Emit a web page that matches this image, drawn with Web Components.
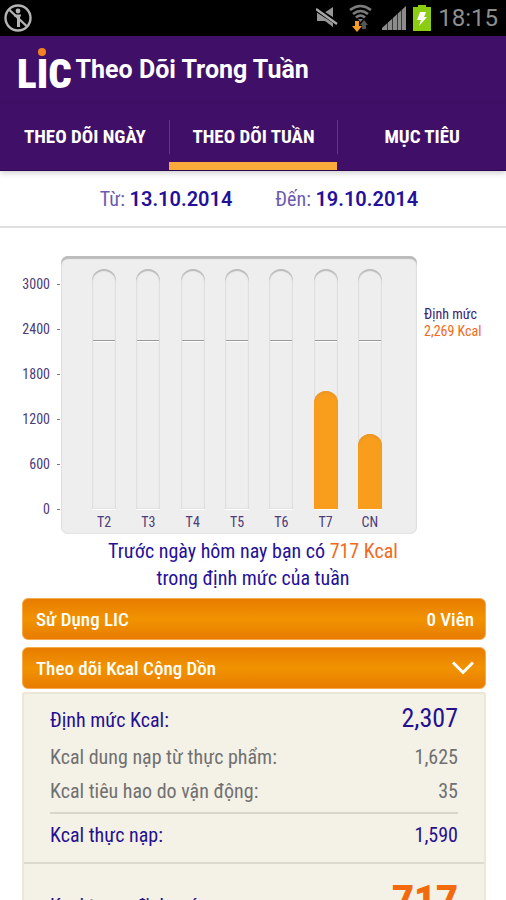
<!DOCTYPE html>
<html lang="vi">
<head>
<meta charset="utf-8">
<meta name="viewport" content="width=device-width, initial-scale=1">
<title>LIC - Theo Dõi Trong Tuần</title>
<style>
  body {
    margin: 0;
    background: #fff;
    color: #25108f;
    font-family: 'Roboto Condensed', Roboto, sans-serif;
    font-size: 20px;
  }
  ::-webkit-scrollbar { display: none; }
</style>
</head>
<body>
<lic-app></lic-app>

<script>
const html = (markup) => {
  const t = document.createElement('template');
  t.innerHTML = markup;
  return t;
};

// attaches an open shadow root with the template of the class
class BaseElement extends HTMLElement {
  constructor() {
    super();
    this.attachShadow({mode: 'open'});
    this.shadowRoot.appendChild(this.constructor.template.content.cloneNode(true));
  }

  $(selector) {
    return this.shadowRoot.querySelector(selector);
  }
}

class StatusBar extends BaseElement {
  static template = html(`
<style>
  :host {
    display: flex;
    align-items: center;
    gap: 7px;
    height: 36px;
    padding: 0 8px 0 4px;
    background: #000;
    color: #8e8e8e;
    font: 24px/36px Roboto, sans-serif;
  }
  svg { display: block; }
  .left { margin-right: auto; }
</style>
<svg class="left" width="28" height="28" viewBox="0 0 28 28" fill="none" stroke="#b4b4b4">
  <circle cx="14" cy="14" r="12.5" stroke-width="2.4"/>
  <circle cx="14" cy="7" r="2.4" fill="#b4b4b4" stroke="none"/>
  <path d="M10 11.5h7M14 11v12M15 11v12" stroke-width="2"/>
  <path d="M5.5 6l17 16" stroke-width="2.4"/>
</svg>
<svg width="24" height="22" viewBox="0 0 24 22">
  <path fill="#969696" d="M1 6h7l9-6v20l-8-6H1z"/>
  <path stroke="#000" stroke-width="5" d="M0 2l23 15"/>
  <path stroke="#a8a8a8" stroke-width="2.4" d="M0 2l21 15"/>
</svg>
<svg width="28" height="28" viewBox="0 0 28 28" fill="none">
  <path stroke="#7c7c7c" stroke-width="2.6" d="M3 6q10.500-8 21 0M6 10q7.500-6 15 0M9 13.500q4.500-4 9 0"/>
  <path fill="#7c7c7c" d="M11 15h5l-2.500 3z"/>
  <path fill="#f79a28" d="M8 17h4v5h3l-5 6-5-6h3z"/>
  <path fill="#555" d="M15 25v-4h-2l4-5 4 5h-2v4z"/>
</svg>
<svg width="24" height="24" viewBox="0 0 24 24">
  <path fill="#8c8c8c" d="M0 24v-2l24-22v24z"/>
  <path stroke="#000" stroke-opacity=".6" d="M5.500 0v24M10.500 0v24M15.500 0v24M19.500 0v24"/>
</svg>
<svg width="18" height="26" viewBox="0 0 18 26">
  <path fill="#8ccc12" d="M5 0h8v2h5v24H0V2h5z"/>
  <path fill="#fff" d="M7 7h6l-2 5h3l-8 9 2-6H4z"/>
</svg>
<time>18:15</time>`);
}

class LicLogo extends BaseElement {
  static template = html(`
<style>
  :host {
    display: block;
    padding-top: 8px;
    color: #fff;
    font-size: 41px;
    font-weight: 900;
    line-height: 44px;
  }
  .i { position: relative; }
  /* orange dot over the middle letter */
  .i::before {
    content: '';
    position: absolute;
    top: -2px;
    left: 50%;
    width: 8px;
    height: 8px;
    margin-left: -4px;
    border-radius: 50%;
    background: #f58220;
  }
</style>
<span>L</span><span class="i">I</span><span>C</span>`);
}

class AppHeader extends BaseElement {
  static template = html(`
<style>
  :host {
    display: flex;
    align-items: center;
    gap: 4px;
    height: 68px;
    padding: 0 17px;
    box-sizing: border-box;
    background: #401068;
  }
  h1 {
    margin: 0;
    color: #fff;
    font: 700 25px/32px Roboto, sans-serif;
  }
</style>
<lic-logo></lic-logo>
<h1><slot></slot></h1>`);
}

class TabBar extends BaseElement {
  static template = html(`
<style>
  :host {
    display: block;
    background: #401068;
  }
  nav {
    display: grid;
    grid-template-columns: repeat(3, 1fr);
    border-bottom: 1px solid #2a0650;
    box-shadow: 0 2px 6px rgba(0, 0, 0, .2);
  }
</style>
<nav><slot></slot></nav>`);
}

class TabItem extends BaseElement {
  static template = html(`
<style>
  :host { display: block; }
  button {
    display: block;
    width: 100%;
    height: 66px;
    padding: 0;
    border: 0;
    border-bottom: 8px solid transparent;
    border-top: 8px solid transparent;
    background: none;
    color: #fff;
    font: inherit;
    font-size: 19px;
    font-weight: 700;
    line-height: 34px;
    cursor: pointer;
  }
  span {
    display: block;
    border-left: 1px solid #62388a;
  }
  :host(:first-child) span { border-color: transparent; }
  :host([active]) button { border-bottom-color: #fbaa3c; }
</style>
<button type="button"><span><slot></slot></span></button>`);
}

class DateRange extends BaseElement {
  static template = html(`
<style>
  :host {
    display: flex;
    justify-content: center;
    gap: 43px;
    padding: 14px 0 13px 12px;
    border-bottom: 2px solid #e0e0e0;
    color: #6a5cae;
    line-height: 28px;
  }
  div { height: 28px; }
  time {
    color: #25109a;
    font-family: Roboto, sans-serif;
    font-weight: 600;
  }
</style>
<div>Từ: <time class="from"></time></div>
<div>Đến: <time class="to"></time></div>`);

  connectedCallback() {
    this.$('.from').textContent = this.getAttribute('from');
    this.$('.to').textContent = this.getAttribute('to');
  }
}

// one tube of the chart, value is in kcal
class ChartBar extends BaseElement {
  static template = html(`
<style>
  :host { display: block; }
  .tube {
    position: relative;
    display: flex;
    align-items: flex-end;
    width: 24px;
    height: 240px;
    margin: 0 auto;
    box-sizing: border-box;
    border-radius: 12px 12px 0 0;
    background: #eee;
    box-shadow: inset 0 2px 1px #bbb, inset 0 0 2px #c8c8c8, 0 1px 0 #fff;
  }
  .quota {
    position: absolute;
    left: 1px;
    right: 1px;
    height: 2px;
    margin-bottom: -3px;
    background: #999;
    border-bottom: 1px solid #fff;
    box-sizing: border-box;
  }
  .fill {
    position: relative;
    width: 100%;
    border-radius: 12px 12px 0 0;
    background: #f99d1c;
    box-shadow: inset 0 2px 2px #e89828;
  }
  .day {
    padding-top: 2px;
    color: #4c3c78;
    font-size: 14px;
    line-height: 23px;
    text-align: center;
  }
</style>
<div class="tube"><div class="quota"></div><div class="fill"></div></div>
<div class="day"></div>`);

  connectedCallback() {
    const max = 3200;
    const percent = (n) => (n / max * 100) + '%';
    this.$('.fill').style.height = percent(this.getAttribute('value'));
    this.$('.quota').style.bottom = percent(this.getAttribute('quota'));
    this.$('.day').textContent = this.getAttribute('day');
  }
}

class WeekChart extends BaseElement {
  static template = html(`
<style>
  :host {
    display: flex;
    padding: 28px 20px 0 22px;
  }
  ol {
    width: 39px;
    margin: 0;
    padding: 6px 0 0;
    box-sizing: border-box;
    list-style: none;
    color: #4c3c78;
    font-size: 14px;
    line-height: 45px;
  }
  li {
    display: flex;
    align-items: center;
    justify-content: flex-end;
    gap: 7px;
  }
  li::after {
    content: '';
    width: 3px;
    height: 1px;
    margin-right: 1px;
    background: #777;
  }
  .plot {
    flex: 1;
    display: grid;
    grid-template-columns: repeat(7, 1fr);
    padding: 13px 25px 0 21px;
    border-radius: 7px;
    background: #eee;
    box-shadow: inset 0 3px 1px #bbb, inset 0 0 2px #ccc;
  }
  .side {
    width: 62px;
    padding: 50px 0 0 7px;
    color: #3c2470;
    font-size: 14px;
    line-height: 17px;
    white-space: nowrap;
  }
  .side b {
    display: block;
    color: #f26a21;
    font-weight: 400;
  }
</style>
<ol><li>3000</li><li>2400</li><li>1800</li><li>1200</li><li>600</li><li>0</li></ol>
<div class="plot"></div>
<div class="side">Định mức <b></b></div>`);

  connectedCallback() {
    const quota = Number(this.getAttribute('quota'));
    const days = ['T2', 'T3', 'T4', 'T5', 'T6', 'T7', 'CN'];
    const values = this.getAttribute('values').split(',');

    days.forEach((day, i) => {
      const bar = document.createElement('chart-bar');
      bar.setAttribute('day', day);
      bar.setAttribute('value', values[i]);
      bar.setAttribute('quota', quota);
      this.$('.plot').appendChild(bar);
    });
    this.$('.side b').textContent = quota.toLocaleString('en-US') + ' Kcal';
  }
}

class ActionBar extends BaseElement {
  static template = html(`
<style>
  :host { display: block; }
  button {
    display: flex;
    align-items: center;
    justify-content: space-between;
    width: 100%;
    height: 42px;
    padding: 0 11px 0 13px;
    border: 1px solid #f6ab4a;
    border-radius: 6px;
    background: linear-gradient(#e87c00, #f19300 50%, #e87c00);
    color: #fff;
    font: inherit;
    font-size: 19px;
    font-weight: 500;
    cursor: pointer;
  }
</style>
<button type="button"><span><slot></slot></span><slot name="end"></slot></button>`);
}

class KcalRow extends BaseElement {
  static template = html(`
<style>
  :host {
    display: flex;
    align-items: baseline;
    justify-content: space-between;
    color: #707070;
    line-height: 34px;
  }
  :host([strong]) { color: #25108f; }
  :host([big]) { line-height: 40px; }
  :host([big]) .value { font-size: 26px; }
  :host([total]) { line-height: 48px; }
  :host([total]) .value {
    color: #f26a0c;
    font: 900 38px/48px Roboto, sans-serif;
  }
</style>
<span><slot></slot></span>
<span class="value"><slot name="value"></slot></span>`);
}

class KcalPanel extends BaseElement {
  static template = html(`
<style>
  :host {
    display: block;
    border: 2px solid #ece6d4;
    border-radius: 3px;
    background: #f4f1e6;
  }
  .rows { padding: 4px 26px 10px; }
  .total {
    padding: 12px 26px;
    border-top: 2px solid #dcdacf;
  }
  ::slotted(hr) {
    height: 2px;
    margin: 4px 0;
    border: 0;
    background: #d8d6cc;
  }
</style>
<div class="rows"><slot></slot></div>
<div class="total"><slot name="total"></slot></div>`);
}

class LicApp extends BaseElement {
  static template = html(`
<style>
  :host { display: block; }
  .message {
    margin: 4px 22px 6px;
    color: #25109a;
    line-height: 27px;
    text-align: center;
  }
  .message em {
    color: #f26a21;
    font-style: normal;
  }
  .actions {
    display: grid;
    gap: 7px;
    padding: 0 20px 0 22px;
  }
  kcal-panel { margin: 3px 20px 0 22px; }
  svg { display: block; }
</style>
<status-bar></status-bar>
<app-header>Theo Dõi Trong Tuần</app-header>
<tab-bar>
  <tab-item>THEO DÕI NGÀY</tab-item>
  <tab-item active>THEO DÕI TUẦN</tab-item>
  <tab-item>MỤC TIÊU</tab-item>
</tab-bar>
<date-range from="13.10.2014" to="19.10.2014"></date-range>
<week-chart quota="2269" values="0,0,0,0,0,1575,1000"></week-chart>
<p class="message">Trước ngày hôm nay bạn có <em>717 Kcal</em><br>trong định mức của tuần</p>
<div class="actions">
  <action-bar>Sử Dụng LIC<span slot="end">0 Viên</span></action-bar>
  <action-bar id="toggle">Theo dõi Kcal Cộng Dồn
    <svg slot="end" width="22" height="14" viewBox="0 0 22 14" fill="none" stroke="#fff" stroke-width="3"><path d="M1 1.500l10 10 10-10"/></svg>
  </action-bar>
</div>
<kcal-panel>
  <kcal-row strong big>Định mức Kcal:<span slot="value">2,307</span></kcal-row>
  <kcal-row>Kcal dung nạp từ thực phẩm:<span slot="value">1,625</span></kcal-row>
  <kcal-row>Kcal tiêu hao do vận động:<span slot="value">35</span></kcal-row>
  <hr>
  <kcal-row strong>Kcal thực nạp:<span slot="value">1,590</span></kcal-row>
  <kcal-row slot="total" strong total>Kcal trong định mức:<span slot="value">717</span></kcal-row>
</kcal-panel>`);

  connectedCallback() {
    const panel = this.$('kcal-panel');
    this.$('#toggle').addEventListener('click', () => {
      panel.hidden = !panel.hidden;
      panel.style.display = panel.hidden ? 'none' : '';
    });
  }
}

customElements.define('status-bar', StatusBar);
customElements.define('lic-logo', LicLogo);
customElements.define('app-header', AppHeader);
customElements.define('tab-bar', TabBar);
customElements.define('tab-item', TabItem);
customElements.define('date-range', DateRange);
customElements.define('chart-bar', ChartBar);
customElements.define('week-chart', WeekChart);
customElements.define('action-bar', ActionBar);
customElements.define('kcal-row', KcalRow);
customElements.define('kcal-panel', KcalPanel);
customElements.define('lic-app', LicApp);
</script>
</body>
</html>
